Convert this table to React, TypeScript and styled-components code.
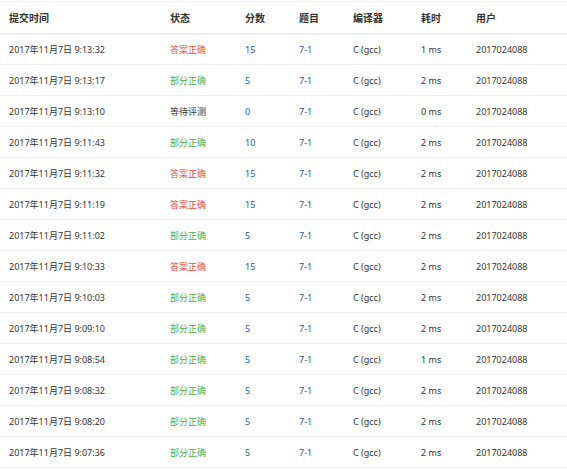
import React from "react";
import styled, { createGlobalStyle } from "styled-components";

const Global = createGlobalStyle`
  html, body { margin: 0; padding: 0; background: #fff; }
  body { font-family: "Noto Sans", "Noto Sans CJK SC", sans-serif; color: #333; }
`;

const Table = styled.table`
  width: 580px;
  border-collapse: collapse;
  table-layout: fixed;
  margin-top: 1px;
  border-top: 1px solid #f2f2f2;
  font-size: 9px;
`;

const Th = styled.th<{ $w: number }>`
  width: ${(p) => p.$w}px;
  height: 32px;
  padding: 0 0 0 9px;
  text-align: left;
  font-weight: bold;
  font-size: 10px;
  color: #333;
  border-bottom: 2px solid #ececec;
  box-sizing: border-box;
`;

const Tr = styled.tr`
  height: 31px;
  border-bottom: 1px solid #f0f0f0;
`;

const Td = styled.td<{ $tone?: "red" | "green" | "blue" | "plain" }>`
  padding: 0 0 0 9px;
  white-space: nowrap;
  color: ${(p) =>
    p.$tone === "red"
      ? "#e74c3c"
      : p.$tone === "green"
      ? "#4cae4c"
      : p.$tone === "blue"
      ? "#2c5a9c"
      : "#333"};
`;

type Row = [string, string, string, string];

const rows: Row[] = [
  ["9:13:32", "答案正确", "15", "1"],
  ["9:13:17", "部分正确", "5", "2"],
  ["9:13:10", "等待评测", "0", "0"],
  ["9:11:43", "部分正确", "10", "2"],
  ["9:11:32", "答案正确", "15", "2"],
  ["9:11:19", "答案正确", "15", "2"],
  ["9:11:02", "部分正确", "5", "2"],
  ["9:10:33", "答案正确", "15", "2"],
  ["9:10:03", "部分正确", "5", "2"],
  ["9:09:10", "部分正确", "5", "2"],
  ["9:08:54", "部分正确", "5", "1"],
  ["9:08:32", "部分正确", "5", "2"],
  ["9:08:20", "部分正确", "5", "2"],
  ["9:07:36", "部分正确", "5", "2"],
];

const tone = (s: string): "red" | "green" | "plain" =>
  s === "答案正确" ? "red" : s === "部分正确" ? "green" : "plain";

export default function App() {
  return (
    <>
      <Global />
      <Table>
        <thead>
          <tr>
            <Th $w={161}>提交时间</Th>
            <Th $w={75}>状态</Th>
            <Th $w={54}>分数</Th>
            <Th $w={54}>题目</Th>
            <Th $w={68}>编译器</Th>
            <Th $w={55}>耗时</Th>
            <Th $w={113}>用户</Th>
          </tr>
        </thead>
        <tbody>
          {rows.map(([t, s, sc, ms], i) => (
            <Tr key={i}>
              <Td>2017年11月7日 {t}</Td>
              <Td $tone={tone(s)}>{s}</Td>
              <Td $tone="blue">{sc}</Td>
              <Td $tone="blue">7-1</Td>
              <Td>C (gcc)</Td>
              <Td>{ms} ms</Td>
              <Td>2017024088</Td>
            </Tr>
          ))}
        </tbody>
      </Table>
    </>
  );
}
